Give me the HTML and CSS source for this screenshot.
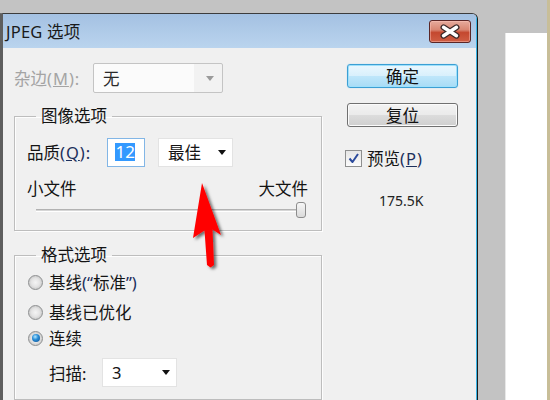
FILE: index.html
```html
<!DOCTYPE html>
<html lang="zh">
<head>
<meta charset="utf-8">
<title>JPEG 选项</title>
<link rel="stylesheet" href="styles.css">
</head>
<body>
<div class="screen">
  <div class="dialog">
    <div class="titlebar">
      <span class="title">JPEG 选项</span>
      <div class="close">
        <svg width="22" height="15" viewBox="-11 -7.5 22 15">
          <path d="M-6.5,-4.2 L6.5,4.2 M6.5,-4.2 L-6.5,4.2" stroke="#3b2a2a" stroke-width="6" stroke-linecap="round" fill="none"/>
          <path d="M-6.5,-4.2 L6.5,4.2 M6.5,-4.2 L-6.5,4.2" stroke="#ffffff" stroke-width="3.4" stroke-linecap="round" fill="none"/>
        </svg>
      </div>
    </div>
    <div class="body">
      <div class="left">
        <div class="row matte">
          <span class="lbl disabled">杂边<span class="wide">(<u>M</u>):</span></span>
          <div class="select sel-matte"><span class="val">无</span><span class="tri gray"></span></div>
        </div>
        <fieldset class="group g1">
          <legend>图像选项</legend>
          <div class="row quality">
            <span class="lbl qlbl">品质<span class="acc wide">(<u>Q</u>):</span></span>
            <div class="num"><span class="hl">12</span></div>
            <div class="select sel-q"><span class="val">最佳</span><span class="tri"></span></div>
          </div>
          <div class="row sizes"><span>小文件</span><span>大文件</span></div>
          <div class="slider"><div class="track"></div><div class="thumb"></div></div>
        </fieldset>
        <fieldset class="group g2">
          <legend>格式选项</legend>
          <div class="radio r1"><span class="dot"></span>基线<span class="acc">(“</span>标准<span class="acc">”)</span></div>
          <div class="radio r2"><span class="dot"></span>基线已优化</div>
          <div class="radio r3"><span class="dot on"></span>连续</div>
          <div class="row scan">
            <span class="lbl slbl">扫描:</span>
            <div class="select sel-scan"><span class="val">3</span><span class="tri"></span></div>
          </div>
        </fieldset>
      </div>
      <div class="right">
        <div class="btn primary">确定</div>
        <div class="btn second">复位</div>
        <div class="check">
          <span class="box">
            <svg width="13" height="13" viewBox="0 0 13 13"><path d="M2.5,6.5 L5.5,10 L11,2" stroke="#2c4b9c" stroke-width="2" fill="none" stroke-linejoin="round"/></svg>
          </span>预览<span class="acc wide">(<u>P</u>)</span>
        </div>
        <div class="size">175.5K</div>
      </div>
    </div>
  </div>
  <div class="gap"></div>
  <div class="panel"></div>
  <div class="tan"></div>
</div>
<svg class="pointer" width="550" height="400" viewBox="0 0 550 400">
  <defs>
    <filter id="sh" x="-50%" y="-50%" width="200%" height="200%">
      <feDropShadow dx="2.5" dy="2" stdDeviation="1.6" flood-color="#000" flood-opacity="0.55"/>
    </filter>
  </defs>
  <polygon points="202,183 221,235 212.5,229.5 214,265 210.5,267.5 207,265 204.5,230.5 193,238" fill="#ff0000" filter="url(#sh)"/>
</svg>
</body>
</html>
```
FILE: styles.css
```css
html, body {
  margin: 0;
  padding: 0;
}
body {
  width: 550px;
  height: 400px;
  overflow: hidden;
  background: #c3c3c3;
  font-family: "Noto Sans", "Noto Sans CJK SC", sans-serif;
  color: #141414;
  position: relative;
}
.screen {
  display: flex;
  width: 550px;
  height: 400px;
}
.dialog {
  flex: none;
  width: 478px;
  height: 387px;
  margin-top: 13px;
  box-sizing: border-box;
  border-top: 1px solid #3c3c3c;
  border-left: 3px solid #5e5e5e;
  border-right: 1px solid #1c1c1c;
  border-top-right-radius: 6px;
  overflow: hidden;
  display: flex;
  flex-direction: column;
}
.titlebar {
  flex: none;
  height: 34px;
  box-sizing: border-box;
  display: flex;
  align-items: center;
  justify-content: space-between;
  padding: 0 5px 0 3px;
  background: linear-gradient(#a4c1e2, #bad4ee);
  border-right: 1px solid #3ab4e6;
}
.title {
  font-size: 16.5px;
  color: #1a1a1a;
  letter-spacing: 0.2px;
}
.close {
  width: 42px;
  height: 23px;
  box-sizing: border-box;
  border: 1px solid #5a2626;
  border-radius: 3px;
  background: linear-gradient(#e6ab9d 0%, #d88672 42%, #c4482f 55%, #cf5e44 100%);
  box-shadow: inset 0 0 0 1px rgba(255, 200, 190, 0.45);
  display: flex;
  align-items: center;
  justify-content: center;
}
.body {
  flex: 1;
  display: flex;
  padding-left: 11px;
  background: #f0f0f0;
  border-right: 1px solid #3ab4e6;
}
.left {
  flex: none;
  width: 308px;
  display: flex;
  flex-direction: column;
}
.row {
  display: flex;
  align-items: center;
}
.lbl {
  font-size: 16.5px;
}
.wide {
  letter-spacing: 1px;
}
.disabled {
  color: #a4a4a4;
}
.acc {
  color: #1c2f5c;
}
.matte {
  margin-top: 15px;
  height: 30px;
}
.matte .lbl {
  width: 79px;
}
.select {
  box-sizing: border-box;
  display: flex;
  align-items: center;
  justify-content: space-between;
  font-size: 16.5px;
  background: #ffffff;
}
.select .val {
  padding-left: 9px;
}
.tri {
  width: 0;
  height: 0;
  border-left: 4.5px solid transparent;
  border-right: 4.5px solid transparent;
  border-top: 5px solid #111;
  margin-right: 6px;
}
.tri.gray {
  border-top-color: #9a9a9a;
  margin-right: 8px;
}
.sel-matte {
  width: 130px;
  height: 30px;
  border: 1px solid #c4c4c4;
  border-radius: 2px;
  background: linear-gradient(90deg, #fbfbfb 0, #fbfbfb 78%, #f2f2f2 78%);
  color: #2a2a2a;
}
.group {
  margin: 0;
  padding: 0 13px 12px 12px;
  border: 1px solid #bdbdbd;
  box-shadow: 1px 1px 0 #fdfdfd, inset 1px 1px 0 #fdfdfd;
  min-width: 0;
}
.group legend {
  font-size: 16.5px;
  line-height: 20px;
  padding: 0 5px;
  margin-left: 9px;
}
.g1 {
  margin-top: 13px;
}
.g2 {
  margin-top: 14px;
}
.quality {
  margin-top: 11px;
  height: 30px;
}
.qlbl {
  width: 80px;
}
.num {
  width: 38px;
  height: 29px;
  box-sizing: border-box;
  border: 1px solid #82b6e6;
  background: #fff;
  display: flex;
  align-items: center;
  padding-left: 7px;
  margin-right: 13px;
}
.hl {
  background: #3399ff;
  color: #fff;
  font-size: 17px;
  line-height: 18px;
  padding: 0 0.5px;
}
.sel-q {
  width: 75px;
  height: 29px;
  border: 1px solid #e3e3e3;
}
.sizes {
  margin-top: 11px;
  height: 20px;
  justify-content: space-between;
  font-size: 16.5px;
}
.slider {
  margin-top: 4px;
  margin-left: 9px;
  width: 270px;
  height: 16px;
  display: flex;
  align-items: center;
}
.track {
  flex: 1;
  height: 1px;
  border-top: 1px solid #b2b2b2;
  border-bottom: 1px solid #ffffff;
  background: #d6d6d6;
}
.thumb {
  width: 10px;
  height: 16px;
  box-sizing: border-box;
  border: 1px solid #8c8c8c;
  border-radius: 3px;
  background: linear-gradient(#f6f6f6, #dadada);
}
.radio {
  display: flex;
  align-items: center;
  height: 26px;
  font-size: 16.5px;
}
.r1 { margin-top: 4px; }
.r2 { margin-top: 4px; }
.r3 { margin-top: 0; }
.dot {
  width: 15px;
  height: 15px;
  box-sizing: border-box;
  border-radius: 50%;
  border: 1px solid #8d8f90;
  background: radial-gradient(circle at 50% 50%, #f4f4f4 0, #e4e4e4 45%, #cfcfcf 70%, #f0f0f0 100%);
  margin-left: 1px;
  margin-right: 6px;
  display: flex;
  align-items: center;
  justify-content: center;
}
.dot.on::after {
  content: "";
  width: 8px;
  height: 8px;
  border-radius: 50%;
  background: radial-gradient(circle at 40% 35%, #b6e8ff 0, #2b8fd8 40%, #0b4a8c 100%);
}
.scan {
  margin-top: 7px;
  height: 29px;
}
.slbl {
  margin-left: 22px;
  width: 53px;
}
.sel-scan {
  width: 75px;
  height: 29px;
  border: 1px solid #e3e3e3;
}
.right {
  flex: none;
  margin-left: 25px;
  display: flex;
  flex-direction: column;
  align-items: flex-start;
}
.btn {
  width: 111px;
  height: 24px;
  box-sizing: border-box;
  border-radius: 3px;
  display: flex;
  align-items: center;
  justify-content: center;
  font-size: 16.5px;
  color: #111;
}
.primary {
  margin-top: 16px;
  border: 1px solid #3c9fd4;
  background: linear-gradient(#eaf7fe 0%, #d9f0fc 48%, #bee6fa 52%, #a8dcf6 100%);
  box-shadow: inset 0 0 0 1px #9ee0fb, 0 0 1px #7ccdf3;
}
.second {
  margin-top: 15px;
  border: 1px solid #707070;
  background: linear-gradient(#f3f3f3 0%, #ebebeb 48%, #dcdcdc 52%, #cfcfcf 100%);
  box-shadow: inset 0 0 0 1px #fbfbfb;
}
.check {
  margin-top: 22px;
  margin-left: -2px;
  display: flex;
  align-items: center;
  height: 18px;
  font-size: 16.5px;
}
.box {
  width: 17px;
  height: 17px;
  box-sizing: border-box;
  border: 1px solid #8e8f8f;
  background: linear-gradient(#e6e6e6, #fbfbfb);
  display: flex;
  align-items: center;
  justify-content: center;
  margin-right: 5px;
}
.size {
  margin-top: 24px;
  margin-left: 32px;
  font-size: 14px;
  line-height: 20px;
  color: #222;
}
.gap {
  flex: none;
  width: 27px;
}
.panel {
  flex: none;
  width: 42px;
  margin-top: 33px;
  background: #ffffff;
  border-left: 1px solid #e8e8e8;
  box-sizing: border-box;
}
.tan {
  flex: none;
  width: 3px;
  background: #c8be98;
}
.pointer {
  position: absolute;
  left: 0;
  top: 0;
  pointer-events: none;
}
```
